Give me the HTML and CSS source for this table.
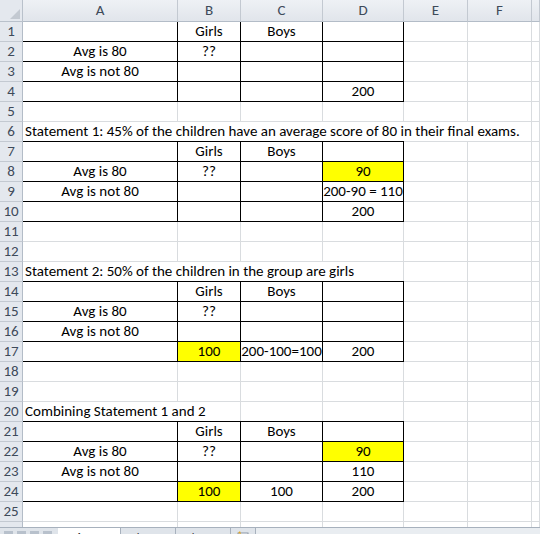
FILE: index.html
```html
<!DOCTYPE html>
<html>
<head>
<meta charset="utf-8">
<link rel="stylesheet" href="styles.css">
</head>
<body>
<div class="app">
  <div class="sheet">
    <div class="corner"><svg width="10" height="10" viewBox="0 0 10 10"><polygon points="10,0 10,10 0,10" fill="#c3c9d1"/></svg></div>
    <div class="ch">A</div><div class="ch">B</div><div class="ch">C</div><div class="ch">D</div><div class="ch">E</div><div class="ch">F</div><div class="ch"></div>

    <div class="rh">1</div><div class="c t"></div><div class="c t m">Girls</div><div class="c t m">Boys</div><div class="c t"></div><div class="c"></div><div class="c"></div><div class="c"></div>
    <div class="rh">2</div><div class="c t m">Avg is 80</div><div class="c t m">??</div><div class="c t"></div><div class="c t"></div><div class="c"></div><div class="c"></div><div class="c"></div>
    <div class="rh">3</div><div class="c t m">Avg is not 80</div><div class="c t"></div><div class="c t"></div><div class="c t"></div><div class="c"></div><div class="c"></div><div class="c"></div>
    <div class="rh">4</div><div class="c t"></div><div class="c t"></div><div class="c t"></div><div class="c t m">200</div><div class="c"></div><div class="c"></div><div class="c"></div>
    <div class="rh">5</div><div class="c"></div><div class="c"></div><div class="c"></div><div class="c"></div><div class="c"></div><div class="c"></div><div class="c"></div>
    <div class="rh">6</div><div class="c txt span6">Statement 1: 45% of the children have an average score of 80 in their final exams.</div><div class="c"></div>
    <div class="rh">7</div><div class="c t top"></div><div class="c t top m">Girls</div><div class="c t top m">Boys</div><div class="c t top"></div><div class="c"></div><div class="c"></div><div class="c"></div>
    <div class="rh">8</div><div class="c t m">Avg is 80</div><div class="c t m">??</div><div class="c t"></div><div class="c t m y">90</div><div class="c"></div><div class="c"></div><div class="c"></div>
    <div class="rh">9</div><div class="c t m">Avg is not 80</div><div class="c t"></div><div class="c t"></div><div class="c t m">200-90 = 110</div><div class="c"></div><div class="c"></div><div class="c"></div>
    <div class="rh">10</div><div class="c t"></div><div class="c t"></div><div class="c t"></div><div class="c t m">200</div><div class="c"></div><div class="c"></div><div class="c"></div>
    <div class="rh">11</div><div class="c"></div><div class="c"></div><div class="c"></div><div class="c"></div><div class="c"></div><div class="c"></div><div class="c"></div>
    <div class="rh">12</div><div class="c"></div><div class="c"></div><div class="c"></div><div class="c"></div><div class="c"></div><div class="c"></div><div class="c"></div>
    <div class="rh">13</div><div class="c txt span4">Statement 2: 50% of the children in the group are girls</div><div class="c"></div><div class="c"></div><div class="c"></div>
    <div class="rh">14</div><div class="c t top"></div><div class="c t top m">Girls</div><div class="c t top m">Boys</div><div class="c t top"></div><div class="c"></div><div class="c"></div><div class="c"></div>
    <div class="rh">15</div><div class="c t m">Avg is 80</div><div class="c t m">??</div><div class="c t"></div><div class="c t"></div><div class="c"></div><div class="c"></div><div class="c"></div>
    <div class="rh">16</div><div class="c t m">Avg is not 80</div><div class="c t"></div><div class="c t"></div><div class="c t"></div><div class="c"></div><div class="c"></div><div class="c"></div>
    <div class="rh">17</div><div class="c t"></div><div class="c t m y">100</div><div class="c t m">200-100=100</div><div class="c t m">200</div><div class="c"></div><div class="c"></div><div class="c"></div>
    <div class="rh">18</div><div class="c"></div><div class="c"></div><div class="c"></div><div class="c"></div><div class="c"></div><div class="c"></div><div class="c"></div>
    <div class="rh">19</div><div class="c"></div><div class="c"></div><div class="c"></div><div class="c"></div><div class="c"></div><div class="c"></div><div class="c"></div>
    <div class="rh">20</div><div class="c txt span2">Combining Statement 1 and 2</div><div class="c"></div><div class="c"></div><div class="c"></div><div class="c"></div><div class="c"></div>
    <div class="rh">21</div><div class="c t top"></div><div class="c t top m">Girls</div><div class="c t top m">Boys</div><div class="c t top"></div><div class="c"></div><div class="c"></div><div class="c"></div>
    <div class="rh">22</div><div class="c t m">Avg is 80</div><div class="c t m">??</div><div class="c t"></div><div class="c t m y">90</div><div class="c"></div><div class="c"></div><div class="c"></div>
    <div class="rh">23</div><div class="c t m">Avg is not 80</div><div class="c t"></div><div class="c t"></div><div class="c t m">110</div><div class="c"></div><div class="c"></div><div class="c"></div>
    <div class="rh">24</div><div class="c t"></div><div class="c t m y">100</div><div class="c t m">100</div><div class="c t m">200</div><div class="c"></div><div class="c"></div><div class="c"></div>
    <div class="rh">25</div><div class="c"></div><div class="c"></div><div class="c"></div><div class="c"></div><div class="c"></div><div class="c"></div><div class="c"></div>
    <div class="rh last"></div><div class="c"></div><div class="c"></div><div class="c"></div><div class="c"></div><div class="c"></div><div class="c"></div><div class="c"></div>
  </div>
  <div class="tabs">
    <div class="nav"><span class="navbtn"></span><span class="navbtn"></span><span class="navbtn"></span><span class="navbtn"></span></div>
    <div class="tab active">Sheet1</div>
    <div class="tab">Sheet2</div>
    <div class="tab">Sheet3</div>
    <div class="tab ins"><svg width="12" height="10" viewBox="0 0 12 10"><rect x="1" y="2" width="10" height="8" fill="#fff" stroke="#8a96a5"/><path d="M3 0 L4 3 L1 2 Z" fill="#e0a82a"/></svg></div>
    <div class="scroll"></div>
  </div>
</div>
</body>
</html>
```

FILE: styles.css
```css
html, body {
  margin: 0;
  padding: 0;
}
body {
  width: 540px;
  height: 534px;
  overflow: hidden;
  background: #ffffff;
  font-family: Carlito, "Lato", "Open Sans", sans-serif;
  font-size: 15px;
  color: #000;
}
.app {
  height: 534px;
  display: flex;
  flex-direction: column;
  overflow: hidden;
}
.sheet {
  flex: none;
  height: 527px;
  overflow: hidden;
  display: grid;
  grid-template-columns: 23px 155px 63px 82px 81px 64px 64px 1fr;
  grid-template-rows: 22px;
  grid-auto-rows: 20px;
}
.corner {
  box-sizing: border-box;
  background: #e4e8ee;
  border-right: 1px solid #b9c1cb;
  border-bottom: 1px solid #b9c1cb;
  display: flex;
  align-items: flex-end;
  justify-content: flex-end;
  padding: 0 2px 2px 0;
}
.corner svg { display: block; }
.ch {
  box-sizing: border-box;
  background: linear-gradient(#eef1f5, #e1e5eb);
  border-right: 1px solid #c3c9d1;
  border-bottom: 1px solid #b3bcc7;
  text-align: center;
  color: #3e4a5a;
  line-height: 21px;
}
.rh {
  box-sizing: border-box;
  background: #e4e8ee;
  border-right: 1px solid #b3bcc7;
  border-bottom: 1px solid #c3c9d1;
  text-align: center;
  color: #3e4a5a;
  line-height: 19px;
}
.c {
  box-sizing: border-box;
  border-right: 1px solid #d9dcdf;
  border-bottom: 1px solid #d9dcdf;
  line-height: 19px;
  white-space: nowrap;
}
.t {
  border-right-color: #000;
  border-bottom-color: #000;
}
.top {
  box-shadow: 0 -1px 0 #000;
}
.m { text-align: center; }
.y { background: #ffff00; }
.txt { padding-left: 2px; }
.span6 { grid-column: span 6; }
.span4 { grid-column: span 4; }
.span2 { grid-column: span 2; }

.tabs {
  flex: none;
  height: 20px;
  display: flex;
  align-items: stretch;
  background: #dfe4ea;
  border-top: 1px solid #a7b1bd;
  font-size: 12px;
  color: #333;
}
.nav {
  width: 58px;
  display: flex;
  gap: 4px;
  padding: 3px 0 0 4px;
  box-sizing: border-box;
}
.navbtn {
  width: 9px;
  height: 9px;
  background: #b8c1cc;
}
.tab {
  padding: 2px 10px 0;
  border-right: 1px solid #a7b1bd;
  line-height: 16px;
}
.tab.active {
  background: #ffffff;
  font-weight: bold;
  padding: 2px 14px 0;
}
.tab.ins {
  padding: 3px 6px 0;
}
.tab.ins svg { display: block; }
.scroll {
  flex: 1;
  background: #e9edf1;
}
```
